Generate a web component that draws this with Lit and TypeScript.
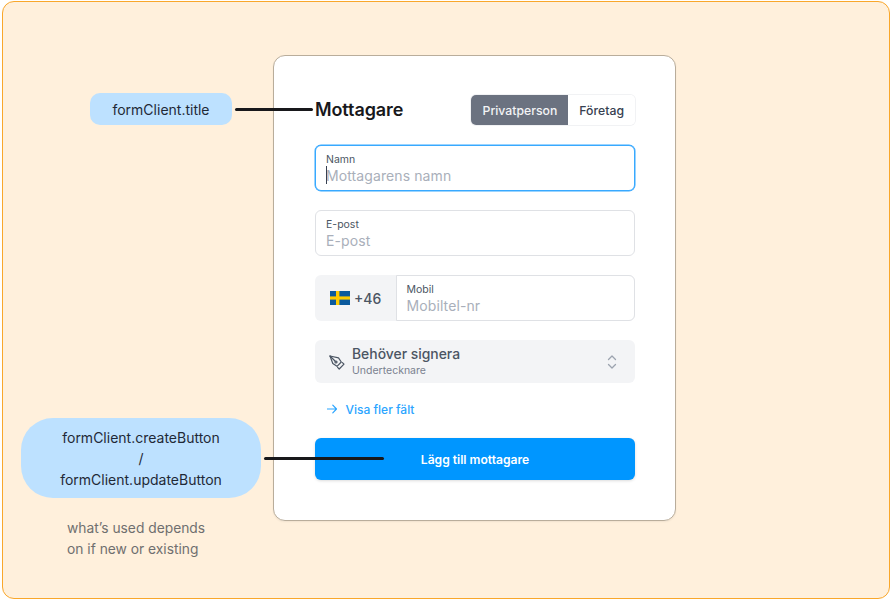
import { LitElement, html, css } from "lit";
import { customElement } from "lit/decorators.js";

@customElement("app-root")
export class AppRoot extends LitElement {
  static styles = css`
    :host { display: block; width: 892px; height: 601px; font-family: Inter, "Liberation Sans", sans-serif; color: #1f2937; }
    * { box-sizing: border-box; }
    .frame { position: relative; margin: 1px 0 0 2px; width: 888px; height: 598px; background: #fff0dc; border: 1px solid #f9a72b; border-radius: 12px; display: flex; align-items: flex-start; padding: 53px 0 0 270px; }
    .card { width: 403px; height: 466px; background: #fff; border: 1px solid #b9ad9b; border-radius: 12px; padding: 39px 40px 0 41px; display: flex; flex-direction: column; box-shadow: 0 1px 2px rgba(0,0,0,.06); }
    .head { display: flex; justify-content: space-between; align-items: center; height: 30px; margin-bottom: 20px; }
    h1 { margin: 0; font-size: 18px; line-height: 30px; font-weight: 600; color: #18181b; letter-spacing: -0.1px; }
    .toggle { display: flex; height: 30px; border-radius: 5px; box-shadow: 0 0 0 1px #f1f2f4; font-size: 12.25px; font-weight: 500; overflow: hidden; }
    .toggle span { display: flex; align-items: center; padding: 0 11px; color: #374151; background: #fff; }
    .toggle .on { background: #6b7280; color: #f3f4f6; padding: 0 11px 0 12px; }
    .field { height: 46px; border: 1px solid #dfe1e5; border-radius: 6px; padding: 7px 10px 0; margin-bottom: 19px; background: #fff; position: relative; }
    .field.focus { border-color: #38a9ff; box-shadow: 0 0 0 .5px #38a9ff; }
    .lab { font-size: 10.5px; line-height: 14px; color: #4b5563; margin-bottom: -1px; }
    .ph { font-size: 14px; line-height: 20px; color: #a9afba; letter-spacing: .1px; white-space: nowrap; }
    .caret { position: absolute; left: 10px; top: 20px; width: 1.2px; height: 18px; background: #374151; }
    .phone { display: flex; height: 46px; background: #f3f4f6; border-radius: 6px; margin-bottom: 19px; }
    .code { width: 81px; display: flex; align-items: center; gap: 4px; padding-left: 15px; font-size: 14px; font-weight: 500; color: #4b5563; }
    .phone .field { flex: 1; margin: 0; border-radius: 0 6px 6px 0; padding-left: 9.5px; }
    .select { height: 43px; border-radius: 6px; background: #f3f4f6; display: flex; align-items: center; padding: 0 18px 0 14px; gap: 7px; margin-bottom: 16px; }
    .sel-text { flex: 1; display: flex; flex-direction: column; }
    .sel-main { font-size: 13.9px; line-height: 17px; font-weight: 500; color: #4b5563; }
    .sel-sub { font-size: 10.5px; line-height: 13px; margin-top: 1px; color: #7b8290; }
    .link { display: flex; align-items: center; gap: 8.5px; height: 20px; padding-left: 12px; color: #2ba5ff; font-size: 12px; font-weight: 500; margin-bottom: 19px; }
    .btn { height: 42px; background: #0096ff; color: #fff; font-size: 12.1px; font-weight: 600; border-radius: 6px; display: flex; align-items: center; justify-content: center; box-shadow: 0 1px 3px rgba(0,0,0,.14); }
    .note { position: absolute; background: #bde1ff; display: flex; align-items: center; justify-content: center; text-align: center; font-size: 14px; line-height: 21px; color: #1f2937; }
    .n1 { left: 87px; top: 91px; width: 142px; height: 32px; border-radius: 10px; }
    .n2 { left: 18px; top: 416px; width: 240px; height: 80px; border-radius: 32px; }
    .line { position: absolute; height: 3px; background: #18181b; border-radius: 2px; }
    .l1 { left: 232px; top: 106px; width: 78px; }
    .l2 { left: 261px; top: 455px; width: 120px; }
    .cap { position: absolute; left: 64px; top: 515.5px; font-size: 13.8px; line-height: 21px; color: #6f6f6f; }
  `;

  render() {
    return html`
      <div class="frame">
        <section class="card">
          <div class="head">
            <h1>Mottagare</h1>
            <div class="toggle"><span class="on">Privatperson</span><span>Företag</span></div>
          </div>
          <div class="field focus">
            <div class="lab">Namn</div>
            <div class="ph">Mottagarens namn</div>
            <i class="caret"></i>
          </div>
          <div class="field">
            <div class="lab">E-post</div>
            <div class="ph">E-post</div>
          </div>
          <div class="phone">
            <div class="code">
              <svg width="20" height="14" viewBox="0 0 20 14"><rect width="20" height="14" fill="#0b5a9d"/><rect x="6" width="3.4" height="14" fill="#fecb00"/><rect y="5.4" width="20" height="3.2" fill="#fecb00"/></svg>
              <span>+46</span>
            </div>
            <div class="field">
              <div class="lab">Mobil</div>
              <div class="ph">Mobiltel-nr</div>
            </div>
          </div>
          <div class="select">
            <svg width="16" height="16" viewBox="0 0 16 16" fill="none" stroke="#4b5563" stroke-width="1.2" stroke-linejoin="round" stroke-linecap="round">
              <path d="M1 2 9.5 3.8 12.3 8 8 12.3 3.8 9.5Z"/>
              <path d="M1 2 6 7"/>
              <circle cx="7" cy="8" r="1"/>
              <path d="M8.6 13.4 10.2 15 15 10.2 13.4 8.6"/>
            </svg>
            <div class="sel-text">
              <span class="sel-main">Behöver signera</span>
              <span class="sel-sub">Undertecknare</span>
            </div>
            <svg width="10" height="16" viewBox="0 0 10 16" fill="none" stroke="#9ca3af" stroke-width="1.3" stroke-linecap="round" stroke-linejoin="round"><path d="M1.5 5.5 5 2 8.5 5.5M1.5 10.5 5 14 8.5 10.5"/></svg>
          </div>
          <div class="link">
            <svg width="10" height="10" viewBox="0 0 10 10" fill="none" stroke="#2ba5ff" stroke-width="1.2" stroke-linecap="round" stroke-linejoin="round"><path d="M.5 5H9.5M5.8 1.2 9.5 5 5.8 8.8"/></svg>
            <span>Visa fler fält</span>
          </div>
          <div class="btn">Lägg till mottagare</div>
        </section>
        <div class="note n1">formClient.title</div>
        <div class="line l1"></div>
        <div class="note n2"><div>formClient.createButton<br />/<br />formClient.updateButton</div></div>
        <div class="line l2"></div>
        <div class="cap">what’s used depends<br />on if new or existing</div>
      </div>
    `;
  }
}
